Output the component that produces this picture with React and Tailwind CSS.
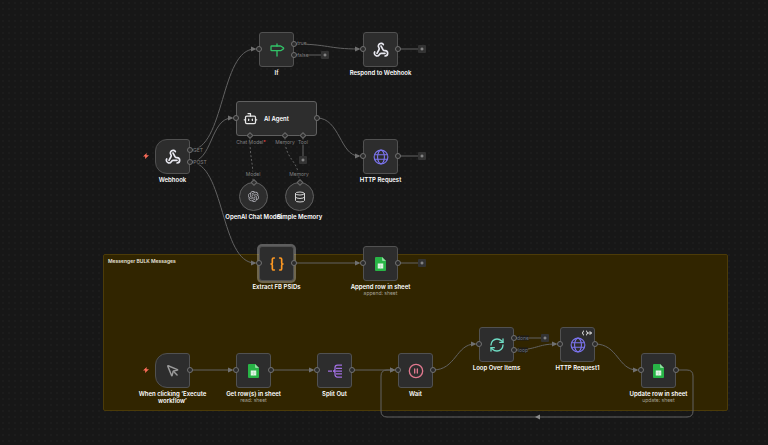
import React from "react";
import {
  Bot,
  Braces,
  CirclePause,
  Database,
  Milestone,
  MousePointer,
  Plus,
  RefreshCw,
  Webhook,
} from "lucide-react";
import { SiOpenai } from "react-icons/si";
import clsx from "clsx";

function GlobeIcon() {
  return (
    <svg
      viewBox="0 0 28 28"
      className="size-4 text-[#7b74ee]"
      fill="none"
      stroke="currentColor"
      strokeWidth="2"
    >
      <circle cx="14" cy="14" r="12" />
      <ellipse cx="14" cy="14" rx="6" ry="12" />
      <path d="M3 10h22M3 18h22" />
    </svg>
  );
}

function SheetIcon() {
  return (
    <svg viewBox="0 0 22 28" className="h-3.5 w-[11px]">
      <path
        d="M2 0h12l8 8v18a2 2 0 0 1-2 2H2a2 2 0 0 1-2-2V2a2 2 0 0 1 2-2z"
        fill="#28b446"
      />
      <path d="M14 0l8 8h-6a2 2 0 0 1-2-2z" fill="#8fdc9f" />
      <rect x="5.5" y="13" width="11" height="10" fill="#e4f6e8" />
      <path d="M5.500 18h11M11 15v8" stroke="#a5dfb0" strokeWidth="1" />
    </svg>
  );
}

function SplitIcon() {
  return (
    <svg
      viewBox="0 0 28 28"
      className="size-3.5 text-[#a06fe0]"
      fill="none"
      stroke="currentColor"
      strokeWidth="2.5"
    >
      <path d="M0 14h8M11 14h17M16 8.500h12M16 19.500h12" />
      <path d="M28 2h-9a5 5 0 0 0-5 5v3a4 4 0 0 1-4 4 4 4 0 0 1 4 4v3a5 5 0 0 0 5 5h9" />
    </svg>
  );
}

function OnceIcon() {
  return (
    <svg
      viewBox="0 0 20 12"
      className="absolute top-0.5 right-0.5 h-1.5 w-2.5 text-white"
      fill="none"
      stroke="currentColor"
      strokeWidth="1.8"
    >
      <path d="M4 1.500a5 5 0 0 0 0 9M8 1.500a5 5 0 0 1 0 9M11 6h8M15.500 2.500 19 6l-3.500 3.500" />
    </svg>
  );
}

function BoltIcon() {
  return (
    <svg viewBox="0 0 12 12" className="size-1.5" fill="#ff6d5a">
      <path d="M7.500 0 0 7h4.500L4 12l8-7.500H7z" />
    </svg>
  );
}

const nodes = [
  { id: "if", x: 259, y: 32, name: "If", icon: <Milestone className="size-4 text-[#32c268]" />, inputs: true, outs: [11, 22] },
  { id: "respond", x: 363, y: 32, name: "Respond to Webhook", icon: <Webhook className="size-4 text-[#e8e8f0]" strokeWidth={2.5} />, inputs: true, outs: [16] },
  { id: "webhook", x: 155, y: 139, name: "Webhook", icon: <Webhook className="size-4 text-[#e8e8f0]" strokeWidth={2.5} />, trigger: true, outs: [10, 22] },
  { id: "http", x: 363, y: 139, name: "HTTP Request", icon: <GlobeIcon />, inputs: true, outs: [16] },
  { id: "extract", x: 259, y: 246, name: "Extract FB PSIDs", icon: <Braces className="size-4 text-[#ff9922]" strokeWidth={2.5} />, inputs: true, outs: [16], selected: true },
  { id: "append", x: 363, y: 246, name: "Append row in sheet", sub: "append: sheet", icon: <SheetIcon />, inputs: true, outs: [16] },
  { id: "manual", x: 155, y: 353, name: "When clicking ‘Execute workflow’", icon: <MousePointer className="size-3.5 text-[#9a9a9a]" strokeWidth={2.5} />, trigger: true, outs: [16] },
  { id: "get", x: 236, y: 353, name: "Get row(s) in sheet", sub: "read: sheet", icon: <SheetIcon />, inputs: true, outs: [16] },
  { id: "split", x: 317, y: 353, name: "Split Out", icon: <SplitIcon />, inputs: true, outs: [16] },
  { id: "wait", x: 398, y: 353, name: "Wait", icon: <CirclePause className="size-4 text-[#e0788e]" />, inputs: true, outs: [16] },
  { id: "loop", x: 479, y: 327, name: "Loop Over Items", icon: <RefreshCw className="size-4 text-[#6fdcc4]" />, inputs: true, outs: [10, 22] },
  { id: "http1", x: 560, y: 327, name: "HTTP Request1", icon: <GlobeIcon />, inputs: true, outs: [16], once: true },
  { id: "update", x: 641, y: 353, name: "Update row in sheet", sub: "update: sheet", icon: <SheetIcon />, inputs: true, outs: [16] },
];

const edges = [
  "M190 150C225 150 220 49 255 49",
  "M190 162C213 162 210 118 232 118",
  "M190 162C225 162 220 263 255 263",
  "M294 44C328 44 328 49 359 49",
  "M317 118C340 118 340 156 359 156",
  "M294 263H359",
  "M190 370H232",
  "M271 370H313",
  "M352 370H394",
  "M433 370C456 370 456 344 475 344",
  "M514 350C537 350 537 344 556 344",
  "M595 344C618 344 618 370 637 370",
  "M676 370H687Q693 370 693 376V411Q693 417 687 417H387Q381 417 381 411V376Q381 370 387 370H394",
];

const stubs = [
  "M294 55H321",
  "M398 49H418",
  "M398 156H418",
  "M398 263H418",
  "M514 338H541",
  "M303 136V156",
];

const adders = [
  { x: 325, y: 55 },
  { x: 422, y: 49 },
  { x: 422, y: 156 },
  { x: 422, y: 263 },
  { x: 545, y: 338 },
  { x: 303, y: 160 },
];

const portLabels = [
  { x: 198, y: 150, text: "GET" },
  { x: 200, y: 162, text: "POST" },
  { x: 302, y: 43, text: "true" },
  { x: 303, y: 55, text: "false" },
  { x: 523, y: 338, text: "done", dark: true },
  { x: 523, y: 350, text: "loop", dark: true },
  { x: 251, y: 142, text: "Chat Model", required: true },
  { x: 285, y: 142, text: "Memory" },
  { x: 303, y: 142, text: "Tool" },
  { x: 253, y: 174, text: "Model" },
  { x: 299, y: 174, text: "Memory" },
];

function Port({ className, style }) {
  return (
    <span
      className={clsx("absolute size-1.5 -translate-y-1/2 rounded-full border border-[#727272] bg-[#2b2b2b]", className)}
      style={style}
    />
  );
}

function Diamond({ className, style }) {
  return (
    <span
      className={clsx("absolute size-[5px] -translate-x-1/2 rotate-45 border border-[#6a6a6a] bg-[#2f2f2f]", className)}
      style={style}
    />
  );
}

function Caption({ name, sub, wide }) {
  return (
    <div
      className={clsx(
        "absolute top-full left-1/2 mt-0.5 w-[70px] -translate-x-1/2 text-center text-[6px] leading-[7px] font-semibold text-white",
        wide && "whitespace-nowrap"
      )}
    >
      {name}
      {sub && <div className="text-[5px] font-normal text-[#a5a295]">{sub}</div>}
    </div>
  );
}

function Node({ node }) {
  return (
    <div className="absolute" style={{ left: node.x, top: node.y }}>
      <div
        className={clsx(
          "relative flex size-[35px] items-center justify-center border border-[#515151] bg-[#2d2d2d]",
          node.trigger ? "rounded-l-[12px] rounded-r-[3px]" : "rounded-[3px]",
          node.selected && "ring-2 ring-white/30"
        )}
      >
        {node.icon}
        {node.once && <OnceIcon />}
        {node.inputs && <Port className="top-4 -left-1" />}
        {node.outs.map((top) => (
          <Port key={top} className="-right-1" style={{ top }} />
        ))}
      </div>
      {node.trigger && (
        <div className="absolute top-3.5 -left-3">
          <BoltIcon />
        </div>
      )}
      <Caption name={node.name} sub={node.sub} />
    </div>
  );
}

function SubNode({ x, y, name, icon }) {
  return (
    <div className="absolute" style={{ left: x, top: y }}>
      <div className="relative flex size-[29px] items-center justify-center rounded-full border border-[#606060] bg-[#2d2d2d]">
        {icon}
        <Diamond className="-top-[3px] left-1/2" />
      </div>
      <Caption name={name} wide />
    </div>
  );
}

function AgentNode() {
  return (
    <div className="absolute top-[101px] left-[236px] flex h-[35px] w-[81px] items-center gap-1.5 rounded-[3px] border border-[#606060] bg-[#2d2d2d] pl-1.5">
      <Bot className="size-[15px] text-[#e8e8e8]" />
      <span className="text-[6px] font-semibold text-white">AI Agent</span>
      <Port className="top-4 -left-1" />
      <Port className="top-4 -right-1" />
      {[13, 48, 66].map((left) => (
        <Diamond key={left} className="-bottom-[3px]" style={{ left }} />
      ))}
    </div>
  );
}

function Edges() {
  return (
    <svg className="pointer-events-none absolute inset-0 size-full" fill="none" stroke="#626262">
      <defs>
        <marker id="arrow" viewBox="0 0 6 6" refX="4" refY="3" markerWidth="6" markerHeight="6" orient="auto">
          <path d="M0 0.500 5.500 3 0 5.500z" fill="#707070" stroke="none" />
        </marker>
      </defs>
      {edges.map((d) => (
        <path key={d} d={d} markerEnd="url(#arrow)" />
      ))}
      {stubs.map((d) => (
        <path key={d} d={d} />
      ))}
      <path d="M250 139C250 160 253 160 253 180" strokeDasharray="2 2" />
      <path d="M285 139C285 160 299 160 299 180" strokeDasharray="2 2" />
      <path d="M540 414.500 535 417l5 2.500z" fill="#8a8a8a" stroke="none" />
    </svg>
  );
}

export default function App() {
  return (
    <main className="relative min-h-screen w-full overflow-hidden bg-[#171717] bg-[radial-gradient(circle_at_center,#1f1f1f_0.500px,transparent_1px)] bg-[size:6px_6px] font-['Inter',sans-serif]">
      <section className="absolute top-[254px] left-[103px] h-[157px] w-[625px] rounded-[2px] border border-[#4c3b08] bg-[#312500] px-1 py-[3px]">
        <h2 className="text-[5px] leading-[7px] font-semibold text-[#e8e4da]">Messenger BULK Messages</h2>
      </section>

      <Edges />

      {portLabels.map((label) => (
        <span
          key={`${label.x}-${label.y}`}
          className={clsx(
            "absolute -translate-x-1/2 -translate-y-1/2 text-[5px] leading-[5px] whitespace-nowrap",
            label.dark ? "bg-[#1e1c18] text-[#6f7480]" : "bg-[#171717] text-[#808080]"
          )}
          style={{ left: label.x, top: label.y }}
        >
          {label.text}
          {label.required && <span className="text-[#ff4d4d]">*</span>}
        </span>
      ))}

      {nodes.map((node) => (
        <Node key={node.id} node={node} />
      ))}
      <AgentNode />
      <SubNode x={239} y={182} name="OpenAI Chat Model" icon={<SiOpenai className="size-[11px] text-[#b4b4bc]" />} />
      <SubNode x={285} y={182} name="Simple Memory" icon={<Database className="size-3 text-[#d4d4d4]" />} />

      {adders.map((a) => (
        <button
          key={`${a.x}-${a.y}`}
          aria-label="Add node"
          className="absolute flex size-2 -translate-x-1/2 -translate-y-1/2 items-center justify-center rounded-[1px] bg-[#333333] text-[#c4c4c4]"
          style={{ left: a.x, top: a.y }}
        >
          <Plus className="size-1" strokeWidth={4} />
        </button>
      ))}
    </main>
  );
}
